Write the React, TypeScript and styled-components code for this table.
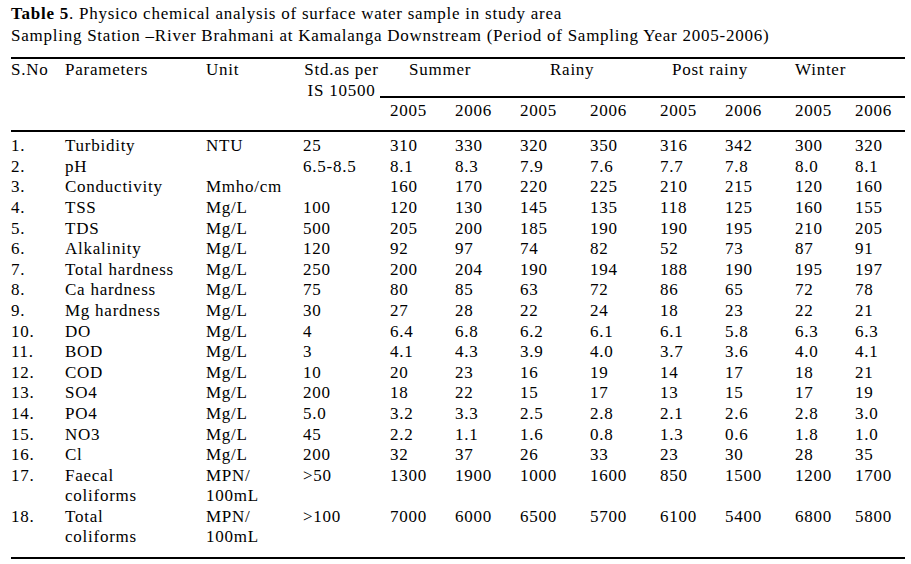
import styled, { createGlobalStyle } from 'styled-components';

const GlobalStyle = createGlobalStyle`
  html, body {
    margin: 0;
    padding: 0;
    background: #fff;
  }
  body {
    font-family: "Liberation Serif", "Times New Roman", serif;
    color: #000;
  }
`;

const Page = styled.div`
  padding: 3px 6px 0 11px;
  font-size: 17px;
  letter-spacing: 0.75px;
`;

const Caption = styled.div`
  line-height: 22px;
  margin-bottom: 10px;

  b {
    font-weight: 700;
  }
`;

const Table = styled.table`
  border-collapse: collapse;
  table-layout: fixed;
  width: 894px;
  line-height: 20.6px;
  border-top: 2px solid #000;
  border-bottom: 2px solid #000;
`;

const Cell = styled.td<{ $first?: boolean; $center?: boolean; $indent?: number }>`
  padding: 0 0 0 ${(p) => (p.$first ? 0 : 10)}px;
  text-align: ${(p) => (p.$center ? 'center' : 'left')};
  text-indent: ${(p) => p.$indent ?? 0}px;
  vertical-align: top;
  white-space: nowrap;
  font-weight: 400;
`;

const HeadRow = styled.tr`
  td {
    padding-top: 1px;
  }
`;

const SeasonCell = styled(Cell)`
  padding-bottom: 15px;
  border-bottom: 2px solid #000;
`;

const YearRow = styled.tr`
  border-bottom: 2px solid #000;

  td {
    padding-top: 3px;
    padding-bottom: 9px;
  }
`;

const DataRow = styled.tr<{ $top?: boolean; $last?: boolean }>`
  td {
    padding-top: ${(p) => (p.$top ? 4 : 0)}px;
    padding-bottom: ${(p) => (p.$last ? 9 : 0)}px;
  }
`;

const widths = [44, 141, 97, 87, 65, 65, 70, 70, 65, 70, 60, 60];

const seasons: [string, number][] = [
  ['Summer', 19],
  ['Rainy', 30],
  ['Post rainy', 12],
  ['Winter', 0],
];

type Row = [string, string[], string[], string, string[]];

const rows: Row[] = [
  ['1.', ['Turbidity'], ['NTU'], '25', ['310', '330', '320', '350', '316', '342', '300', '320']],
  ['2.', ['pH'], [''], '6.5-8.5', ['8.1', '8.3', '7.9', '7.6', '7.7', '7.8', '8.0', '8.1']],
  ['3.', ['Conductivity'], ['Mmho/cm'], '', ['160', '170', '220', '225', '210', '215', '120', '160']],
  ['4.', ['TSS'], ['Mg/L'], '100', ['120', '130', '145', '135', '118', '125', '160', '155']],
  ['5.', ['TDS'], ['Mg/L'], '500', ['205', '200', '185', '190', '190', '195', '210', '205']],
  ['6.', ['Alkalinity'], ['Mg/L'], '120', ['92', '97', '74', '82', '52', '73', '87', '91']],
  ['7.', ['Total hardness'], ['Mg/L'], '250', ['200', '204', '190', '194', '188', '190', '195', '197']],
  ['8.', ['Ca hardness'], ['Mg/L'], '75', ['80', '85', '63', '72', '86', '65', '72', '78']],
  ['9.', ['Mg hardness'], ['Mg/L'], '30', ['27', '28', '22', '24', '18', '23', '22', '21']],
  ['10.', ['DO'], ['Mg/L'], '4', ['6.4', '6.8', '6.2', '6.1', '6.1', '5.8', '6.3', '6.3']],
  ['11.', ['BOD'], ['Mg/L'], '3', ['4.1', '4.3', '3.9', '4.0', '3.7', '3.6', '4.0', '4.1']],
  ['12.', ['COD'], ['Mg/L'], '10', ['20', '23', '16', '19', '14', '17', '18', '21']],
  ['13.', ['SO4'], ['Mg/L'], '200', ['18', '22', '15', '17', '13', '15', '17', '19']],
  ['14.', ['PO4'], ['Mg/L'], '5.0', ['3.2', '3.3', '2.5', '2.8', '2.1', '2.6', '2.8', '3.0']],
  ['15.', ['NO3'], ['Mg/L'], '45', ['2.2', '1.1', '1.6', '0.8', '1.3', '0.6', '1.8', '1.0']],
  ['16.', ['Cl'], ['Mg/L'], '200', ['32', '37', '26', '33', '23', '30', '28', '35']],
  ['17.', ['Faecal', 'coliforms'], ['MPN/', '100mL'], '>50', ['1300', '1900', '1000', '1600', '850', '1500', '1200', '1700']],
  ['18.', ['Total', 'coliforms'], ['MPN/', '100mL'], '>100', ['7000', '6000', '6500', '5700', '6100', '5400', '6800', '5800']],
];

const lines = (items: string[]) =>
  items.map((t, i) => (
    <span key={i}>
      {i > 0 && <br />}
      {t}
    </span>
  ));

export default function App() {
  return (
    <Page>
      <GlobalStyle />
      <Caption>
        <b>Table 5</b>. Physico chemical analysis of surface water sample in study area
        <br />
        Sampling Station –River Brahmani at Kamalanga Downstream (Period of Sampling Year 2005-2006)
      </Caption>
      <Table>
        <colgroup>
          {widths.map((w, i) => (
            <col key={i} style={{ width: w }} />
          ))}
        </colgroup>
        <thead>
          <HeadRow>
            <Cell $first rowSpan={2}>S.No</Cell>
            <Cell rowSpan={2}>Parameters</Cell>
            <Cell rowSpan={2}>Unit</Cell>
            <Cell rowSpan={2} $center>
              Std.as per
              <br />
              IS 10500
            </Cell>
            {seasons.map(([name, indent]) => (
              <SeasonCell key={name} colSpan={2} $indent={indent}>
                {name}
              </SeasonCell>
            ))}
          </HeadRow>
          <YearRow>
            {seasons.map(([name]) => [
              <Cell key={name + '05'}>2005</Cell>,
              <Cell key={name + '06'}>2006</Cell>,
            ])}
          </YearRow>
        </thead>
        <tbody>
          {rows.map(([no, param, unit, std, vals], i) => (
            <DataRow key={no} $top={i === 0} $last={i === rows.length - 1}>
              <Cell $first>{no}</Cell>
              <Cell>{lines(param)}</Cell>
              <Cell>{lines(unit)}</Cell>
              <Cell>{std}</Cell>
              {vals.map((v, j) => (
                <Cell key={j}>{v}</Cell>
              ))}
            </DataRow>
          ))}
        </tbody>
      </Table>
    </Page>
  );
}
